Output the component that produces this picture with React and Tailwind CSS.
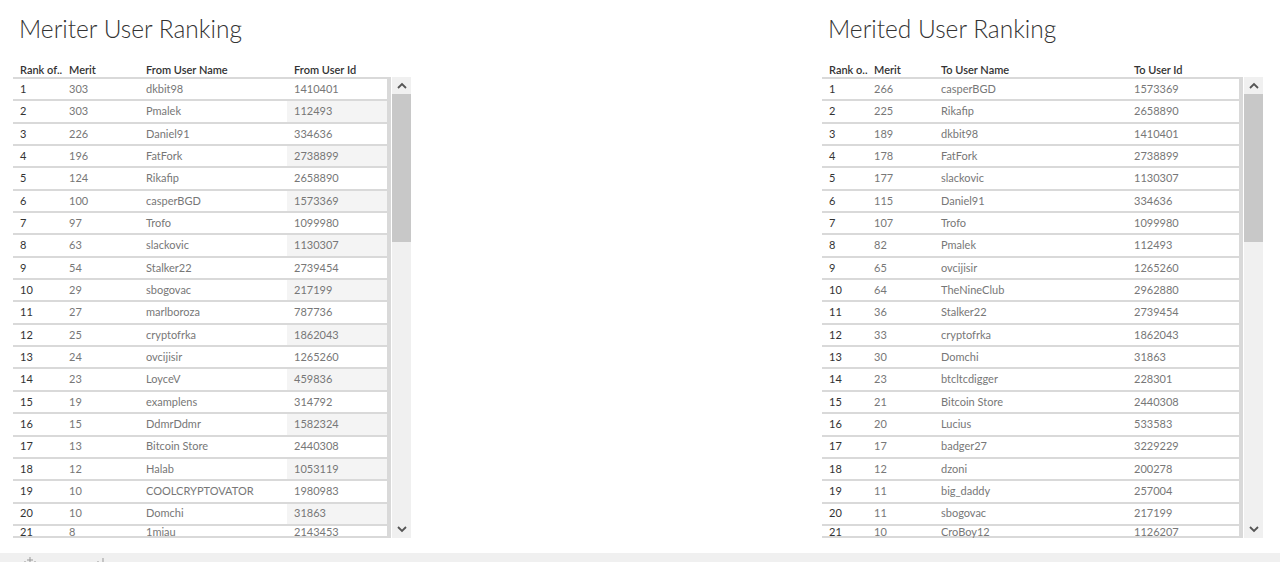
import React from "react";

const left = [
  [1, 303, "dkbit98", 1410401],
  [2, 303, "Pmalek", 112493],
  [3, 226, "Daniel91", 334636],
  [4, 196, "FatFork", 2738899],
  [5, 124, "Rikafip", 2658890],
  [6, 100, "casperBGD", 1573369],
  [7, 97, "Trofo", 1099980],
  [8, 63, "slackovic", 1130307],
  [9, 54, "Stalker22", 2739454],
  [10, 29, "sbogovac", 217199],
  [11, 27, "marlboroza", 787736],
  [12, 25, "cryptofrka", 1862043],
  [13, 24, "ovcijisir", 1265260],
  [14, 23, "LoyceV", 459836],
  [15, 19, "examplens", 314792],
  [16, 15, "DdmrDdmr", 1582324],
  [17, 13, "Bitcoin Store", 2440308],
  [18, 12, "Halab", 1053119],
  [19, 10, "COOLCRYPTOVATOR", 1980983],
  [20, 10, "Domchi", 31863],
  [21, 8, "1miau", 2143453],
];

const right = [
  [1, 266, "casperBGD", 1573369],
  [2, 225, "Rikafip", 2658890],
  [3, 189, "dkbit98", 1410401],
  [4, 178, "FatFork", 2738899],
  [5, 177, "slackovic", 1130307],
  [6, 115, "Daniel91", 334636],
  [7, 107, "Trofo", 1099980],
  [8, 82, "Pmalek", 112493],
  [9, 65, "ovcijisir", 1265260],
  [10, 64, "TheNineClub", 2962880],
  [11, 36, "Stalker22", 2739454],
  [12, 33, "cryptofrka", 1862043],
  [13, 30, "Domchi", 31863],
  [14, 23, "btcltcdigger", 228301],
  [15, 21, "Bitcoin Store", 2440308],
  [16, 20, "Lucius", 533583],
  [17, 17, "badger27", 3229229],
  [18, 12, "dzoni", 200278],
  [19, 11, "big_daddy", 257004],
  [20, 11, "sbogovac", 217199],
  [21, 10, "CroBoy12", 1126207],
];

function ScrollBar() {
  return (
    <div className="w-[19px] h-full bg-[#f0f0f0] flex flex-col">
      <div className="h-[17px] flex items-center justify-center">
        <svg width="10" height="7" viewBox="0 0 10 7">
          <path d="M1 6 L5 2 L9 6" fill="none" stroke="#555" strokeWidth="1.8" />
        </svg>
      </div>
      <div className="h-[148px] bg-[#c8c8c8]" />
      <div className="flex-1" />
      <div className="h-[18px] flex items-center justify-center">
        <svg width="10" height="7" viewBox="0 0 10 7">
          <path d="M1 1 L5 5 L9 1" fill="none" stroke="#555" strokeWidth="1.8" />
        </svg>
      </div>
    </div>
  );
}

function Table({ title, cols, widths, rows, shadeId }) {
  return (
    <div className="flex flex-col">
      <div className="h-[60px] pl-[6px] pt-[13px] text-[24.5px] leading-[32px] font-light text-[#333] whitespace-nowrap">
        {title}
      </div>
      <div className="flex h-[17px] items-center pt-[3px] text-[11px] font-semibold text-[#333]">
        {cols.map((c, i) => (
          <div key={i} className="pl-[7px] whitespace-nowrap" style={{ width: widths[i] }}>
            {c}
          </div>
        ))}
      </div>
      <div className="flex h-[461px]">
        <div className="flex flex-col border-t-2 border-b-2 border-[#d9d9d9]">
          {rows.map((r, idx) => {
            const last = idx === rows.length - 1;
            const even = (idx + 1) % 2 === 0;
            const cell = last ? "pl-[7px] leading-[11px] " : "pl-[7px] flex items-center ";
            return (
              <div
                key={idx}
                className={
                  "flex shrink-0 items-stretch text-[11px] " +
                  (last ? "h-[10px]" : "h-[22.35px] border-b-2 border-[#d9d9d9]")
                }
              >
                <div className={cell + "text-[#333]"} style={{ width: widths[0] }}>
                  {r[0]}
                </div>
                <div className={cell + "text-[#777]"} style={{ width: widths[1] }}>
                  {r[1]}
                </div>
                <div className={cell + "text-[#777]"} style={{ width: widths[2] }}>
                  {r[2]}
                </div>
                <div
                  className={cell + "text-[#777] " + (shadeId && even && !last ? "bg-[#f4f4f4]" : "")}
                  style={{ width: widths[3] }}
                >
                  {r[3]}
                </div>
                <div className="w-[4px] border-l-2 border-r-2 border-[#d9d9d9] bg-[#f6f6f6]" />
              </div>
            );
          })}
        </div>
        <div className="w-[1px]" />
        <ScrollBar />
      </div>
    </div>
  );
}

export default function App() {
  return (
    <div
      className="w-[1280px] h-[562px] bg-white overflow-hidden flex flex-col"
      style={{ fontFamily: "Lato, 'Open Sans', sans-serif" }}
    >
      <div className="flex h-[553px]">
        <div className="ml-[13px]">
          <Table
            title="Meriter User Ranking"
            cols={["Rank of..", "Merit", "From User Name", "From User Id"]}
            widths={[49, 77, 148, 100]}
            rows={left}
            shadeId
          />
        </div>
        <div className="ml-[411px]">
          <Table
            title="Merited User Ranking"
            cols={["Rank o..", "Merit", "To User Name", "To User Id"]}
            widths={[45, 67, 193, 112]}
            rows={right}
          />
        </div>
      </div>
      <div className="flex-1 bg-[#f0f0f0] flex items-end gap-[60px] pl-[24px]">
        <svg width="12" height="5" viewBox="0 0 12 5">
          <path d="M6 0 V5 M3 3 H9 M1 4 V5 M11 4 V5" stroke="#999" strokeWidth="1" />
        </svg>
        <svg width="10" height="5" viewBox="0 0 10 5">
          <path d="M2 4 V5 M7 1 V5" stroke="#999" strokeWidth="1" />
        </svg>
      </div>
    </div>
  );
}
